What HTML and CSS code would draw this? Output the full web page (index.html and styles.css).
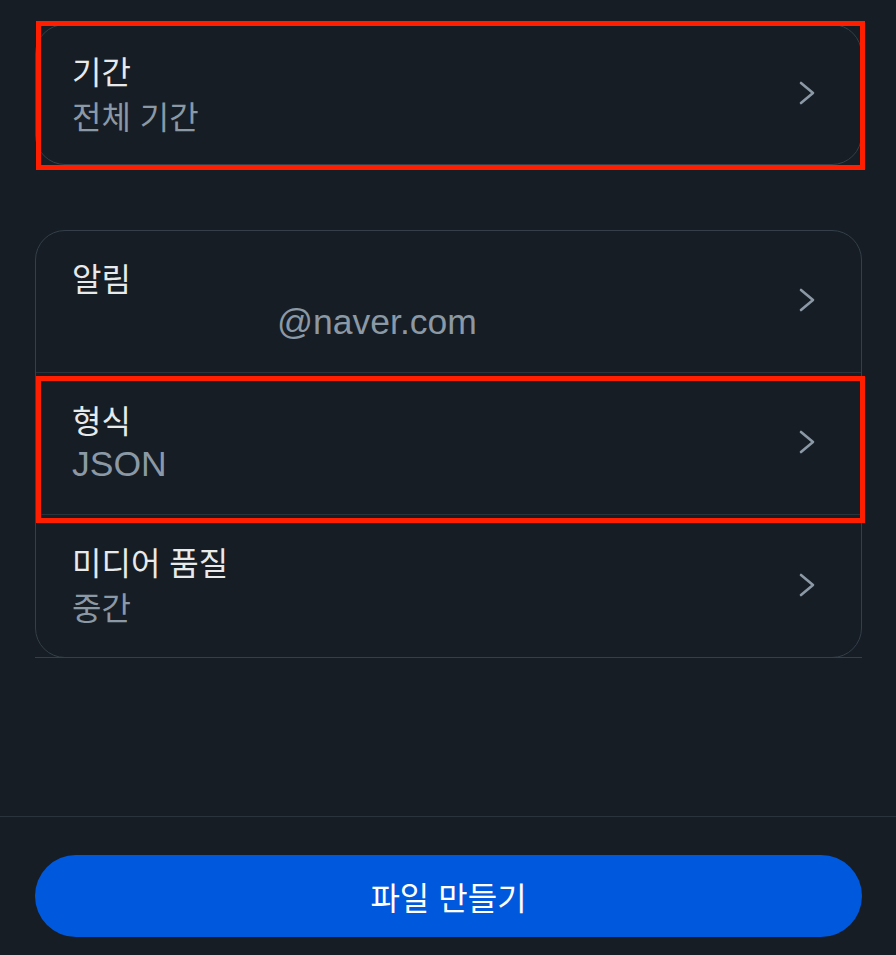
FILE: index.html
```html
<!DOCTYPE html>
<html lang="ko">
<head>
<meta charset="utf-8">
<title>데이터 내보내기</title>
<link rel="stylesheet" href="styles.css">
</head>
<body>
<main class="page">
  <section class="card card-single">
    <div class="row row-first">
      <div class="texts">
        <div class="label">기간</div>
        <div class="value">전체 기간</div>
      </div>
      <svg class="chev" viewBox="0 0 16 24" width="16" height="24" aria-hidden="true"><polyline points="2,2 14,12 2,22"/></svg>
    </div>
    <div class="mark mark-a"></div>
  </section>

  <section class="card card-group">
    <div class="row">
      <div class="texts">
        <div class="label">알림</div>
        <div class="value latin"><span class="redact"></span>@naver.com</div>
      </div>
      <svg class="chev" viewBox="0 0 16 24" width="16" height="24" aria-hidden="true"><polyline points="2,2 14,12 2,22"/></svg>
    </div>
    <div class="row row-mark">
      <div class="texts">
        <div class="label">형식</div>
        <div class="value latin">JSON</div>
      </div>
      <svg class="chev" viewBox="0 0 16 24" width="16" height="24" aria-hidden="true"><polyline points="2,2 14,12 2,22"/></svg>
      <div class="mark mark-b"></div>
    </div>
    <div class="row row-last">
      <div class="texts">
        <div class="label">미디어 품질</div>
        <div class="value">중간</div>
      </div>
      <svg class="chev" viewBox="0 0 16 24" width="16" height="24" aria-hidden="true"><polyline points="2,2 14,12 2,22"/></svg>
    </div>
  </section>

  <div class="spacer"></div>

  <footer class="footer">
    <button class="btn" type="button">파일 만들기</button>
  </footer>
</main>
</body>
</html>
```

FILE: styles.css
```css
* { box-sizing: border-box; }

html, body {
  margin: 0;
  padding: 0;
  background: #161d24;
}

body {
  width: 896px;
  height: 955px;
  overflow: hidden;
  font-family: "Noto Sans CJK KR", "Noto Sans", sans-serif;
  color: #e7e9ea;
}

.page {
  display: flex;
  flex-direction: column;
  height: 955px;
  padding-top: 24px;
}

.card {
  position: relative;
  margin: 0 34px 0 35px;
  border: 1px solid #343f49;
  border-radius: 30px;
  background: #161d24;
}

.card-group {
  margin-top: 65px;
}

.row {
  position: relative;
  display: flex;
  align-items: center;
  justify-content: space-between;
  height: 142px;
  padding: 0 46px 0 36px;
  border-bottom: 1px solid #2a333c;
}

.row-first {
  height: 139px;
  border-bottom: none;
}

.row-last {
  height: 143px;
  margin: 0 -1px -1px;
  padding-left: 37px;
  padding-right: 47px;
  border-bottom: 1px solid #343f49;
}

.texts {
  display: flex;
  flex-direction: column;
  margin-top: -4px;
}

.label {
  font-size: 32px;
  line-height: 45px;
  color: #e7e9ea;
}

.value {
  font-size: 32px;
  line-height: 45px;
  color: #8b98a5;
}

.value.latin {
  font-family: "Liberation Sans", "Noto Sans CJK KR", sans-serif;
  font-size: 35.5px;
}

.redact {
  display: inline-block;
  width: 205px;
}

.chev {
  flex: none;
  margin-top: -3px;
  fill: none;
  stroke: #8b98a5;
  stroke-width: 2.6;
  stroke-linecap: round;
  stroke-linejoin: round;
}

.mark {
  position: absolute;
  border: 5px solid #ff1f00;
  pointer-events: none;
}

.mark-a {
  top: -4px;
  left: 0;
  right: -4px;
  bottom: -6px;
}

.mark-b {
  top: 3px;
  left: 0;
  right: -4px;
  bottom: -9px;
}

.spacer {
  flex: 1;
}

.footer {
  border-top: 1px solid #2a333c;
  padding: 38px 34px 18px 35px;
}

.btn {
  display: block;
  width: 100%;
  height: 82px;
  border: none;
  border-radius: 41px;
  background: #0059dc;
  color: #ffffff;
  font-family: "Noto Sans CJK KR", "Noto Sans", sans-serif;
  font-size: 32px;
  line-height: 82px;
  padding: 0;
}
```
